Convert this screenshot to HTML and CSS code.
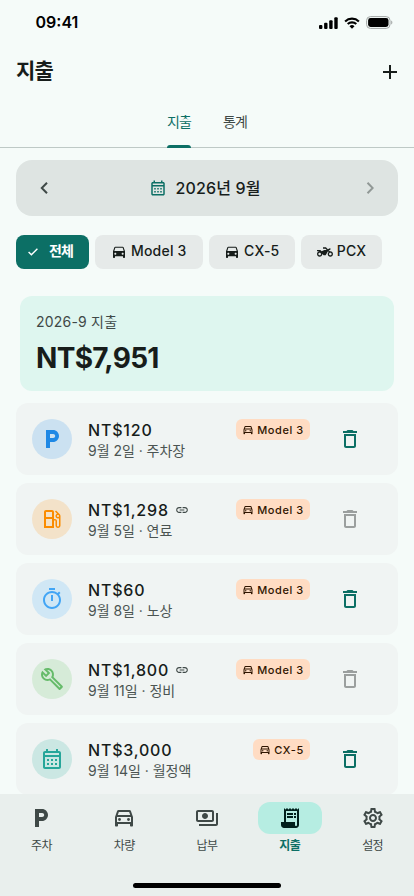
FILE: index.html
```html
<!DOCTYPE html>
<html lang="ko">
<head>
<meta charset="utf-8">
<meta name="viewport" content="width=device-width, initial-scale=1">
<title>지출</title>
<link rel="stylesheet" href="styles.css">
</head>
<body>
<svg class="sprite" aria-hidden="true">
  <symbol id="parking" viewBox="0 0 24 24"><path d="M13 3H6v18h4v-6h3c3.31 0 6-2.69 6-6s-2.69-6-6-6zm.2 8H10V7h3.2c1.1 0 2 .9 2 2s-.9 2-2 2z"/></symbol>
  <symbol id="car" viewBox="0 0 24 24"><path d="M18.92 5.01C18.72 4.42 18.16 4 17.5 4h-11c-.66 0-1.21.42-1.42 1.01L3 11v9c0 .55.45 1 1 1h1c.55 0 1-.45 1-1v-1.5h12V20c0 .55.45 1 1 1h1c.55 0 1-.45 1-1v-9l-2.08-5.99zM6.5 16c-.83 0-1.5-.67-1.5-1.5S5.67 13 6.5 13s1.5.67 1.5 1.5S7.33 16 6.5 16zm11 0c-.83 0-1.5-.67-1.5-1.5s.67-1.5 1.5-1.5 1.5.67 1.5 1.5-.67 1.5-1.5 1.5zM5 10.5l1.5-5h11l1.5 5H5z"/></symbol>
  <symbol id="car-line" viewBox="0 0 24 24"><path d="M18.92 5.01C18.72 4.42 18.16 4 17.5 4h-11c-.66 0-1.21.42-1.42 1.01L3 11v8.5c0 .55.45 1 1 1h1c.55 0 1-.45 1-1V18h12v1.5c0 .55.45 1 1 1h1c.55 0 1-.45 1-1V11l-2.08-5.99zM6.85 6h10.29l1.08 3.11H5.77L6.85 6zM19 16H5v-5h14v5z"/><circle cx="7.5" cy="13.5" r="1.4"/><circle cx="16.5" cy="13.5" r="1.4"/></symbol>
  <symbol id="moto" viewBox="0 0 24 24"><path d="M20 11c-.18 0-.36.03-.53.05L17.41 9H20V6l-3.72 1.86L13.41 5H9v2h3.59l2 2H11l-4 2-2-2H0v2h4c-2.21 0-4 1.79-4 4s1.79 4 4 4 4-1.79 4-4l2 2h3l3.49-6.1 1.01 1.01c-.91.73-1.5 1.84-1.5 3.09 0 2.21 1.79 4 4 4s4-1.79 4-4-1.79-4-4-4zM4 17c-1.1 0-2-.9-2-2s.9-2 2-2 2 .9 2 2-.9 2-2 2zm16 0c-1.1 0-2-.9-2-2s.9-2 2-2 2 .9 2 2-.9 2-2 2z"/></symbol>
  <symbol id="fuel" viewBox="0 0 24 24"><path d="M19.77 7.23l.01-.01-3.72-3.72L15 4.56l2.11 2.11c-.94.36-1.61 1.26-1.61 2.33 0 1.38 1.12 2.5 2.5 2.5.36 0 .69-.08 1-.21v7.21c0 .55-.45 1-1 1s-1-.45-1-1V14c0-1.1-.9-2-2-2h-1V5c0-1.1-.9-2-2-2H6c-1.1 0-2 .9-2 2v16h10v-7.5h1.5v5c0 1.38 1.12 2.5 2.5 2.5s2.5-1.12 2.5-2.5V9c0-.69-.28-1.32-.73-1.77zM12 13.5V19H6v-7h6v1.5zm0-3.5H6V5h6v5zm6 0c-.55 0-1-.45-1-1s.45-1 1-1 1 .45 1 1-.45 1-1 1z"/></symbol>
  <symbol id="timer" viewBox="0 0 24 24"><path d="M15 1H9v2h6V1zm-4 13h2V8h-2v6zm8.03-6.61l1.42-1.42c-.43-.51-.9-.99-1.41-1.41l-1.42 1.42C16.07 4.74 14.12 4 12 4c-4.97 0-9 4.03-9 9s4.02 9 9 9 9-4.03 9-9c0-2.12-.74-4.07-1.97-5.61zM12 20c-3.87 0-7-3.13-7-7s3.13-7 7-7 7 3.13 7 7-3.13 7-7 7z"/></symbol>
  <symbol id="wrench" viewBox="0 0 24 24"><path d="M22.61 18.99l-9.08-9.08c.93-2.34.45-5.1-1.44-7C9.79.61 6.21.4 3.66 2.26L7.5 6.11 6.08 7.52 2.25 3.69C.39 6.23.6 9.82 2.9 12.11c1.86 1.86 4.57 2.35 6.89 1.48l9.11 9.11c.39.39 1.02.39 1.41 0l2.3-2.3c.4-.38.4-1.01 0-1.41zm-3 1.6l-9.46-9.46c-.61.45-1.29.72-2 .82-1.36.2-2.79-.21-3.83-1.25C3.37 9.76 2.93 8.5 3 7.26l3.09 3.09 4.24-4.24-3.09-3.09c1.24-.07 2.49.37 3.44 1.31 1.08 1.08 1.49 2.57 1.24 3.96-.12.71-.42 1.37-.88 1.96l9.45 9.45-.88.89z"/></symbol>
  <symbol id="calendar" viewBox="0 0 24 24"><path d="M19 4h-1V2h-2v2H8V2H6v2H5c-1.11 0-1.99.9-1.99 2L3 20c0 1.1.89 2 2 2h14c1.1 0 2-.9 2-2V6c0-1.1-.9-2-2-2zm0 16H5V10h14v10zm0-12H5V6h14v2zM9 14H7v-2h2v2zm4 0h-2v-2h2v2zm4 0h-2v-2h2v2zm-8 4H7v-2h2v2zm4 0h-2v-2h2v2zm4 0h-2v-2h2v2z"/></symbol>
  <symbol id="trash" viewBox="0 0 24 24"><path d="M6 19c0 1.1.9 2 2 2h8c1.1 0 2-.9 2-2V7H6v12zM8 9h8v10H8V9zm7.5-5l-1-1h-5l-1 1H5v2h14V4z"/></symbol>
  <symbol id="link" viewBox="0 0 24 24"><path d="M3.9 12c0-1.71 1.39-3.1 3.1-3.1h4V7H7c-2.76 0-5 2.24-5 5s2.24 5 5 5h4v-1.9H7c-1.71 0-3.1-1.39-3.1-3.1zM8 13h8v-2H8v2zm9-6h-4v1.9h4c1.71 0 3.1 1.39 3.1 3.1s-1.39 3.1-3.1 3.1h-4V17h4c2.76 0 5-2.24 5-5s-2.24-5-5-5z"/></symbol>
  <symbol id="payments" viewBox="0 0 24 24"><path d="M19 14V6c0-1.1-.9-2-2-2H3c-1.1 0-2 .9-2 2v8c0 1.1.9 2 2 2h14c1.1 0 2-.9 2-2zm-2 0H3V6h14v8zm-7-7c-1.66 0-3 1.34-3 3s1.34 3 3 3 3-1.34 3-3-1.34-3-3-3zm13 0v11c0 1.1-.9 2-2 2H4v-2h17V7h2z"/></symbol>
  <symbol id="receipt" viewBox="0 0 24 24"><path fill-rule="evenodd" d="M19.5 3.5L18 2l-1.5 1.5L15 2l-1.5 1.5L12 2l-1.5 1.5L9 2 7.5 3.5 6 2v14H3v3c0 1.66 1.34 3 3 3h12c1.66 0 3-1.34 3-3V2l-1.5 1.5zM19 19c0 .55-.45 1-1 1s-1-.45-1-1v-3H8V5h11v14z"/><path d="M9 7h6v2H9zM16 7h2v2h-2zM9 10h6v2H9zM16 10h2v2h-2z"/></symbol>
  <symbol id="gear" viewBox="0 0 24 24"><path d="M19.43 12.98c.04-.32.07-.64.07-.98s-.03-.66-.07-.98l2.11-1.65c.19-.15.24-.42.12-.64l-2-3.46c-.09-.16-.26-.25-.44-.25-.06 0-.12.01-.17.03l-2.49 1c-.52-.4-1.08-.73-1.69-.98l-.38-2.65C14.46 2.18 14.25 2 14 2h-4c-.25 0-.46.18-.49.42l-.38 2.65c-.61.25-1.17.59-1.69.98l-2.49-1c-.06-.02-.12-.03-.18-.03-.17 0-.34.09-.43.25l-2 3.46c-.13.22-.07.49.12.64l2.11 1.65c-.04.32-.07.65-.07.98s.03.66.07.98l-2.11 1.65c-.19.15-.24.42-.12.64l2 3.46c.09.16.26.25.44.25.06 0 .12-.01.17-.03l2.49-1c.52.4 1.08.73 1.69.98l.38 2.65c.03.24.24.42.49.42h4c.25 0 .46-.18.49-.42l.38-2.65c.61-.25 1.17-.59 1.69-.98l2.49 1c.06.02.12.03.18.03.17 0 .34-.09.43-.25l2-3.46c.12-.22.07-.49-.12-.64l-2.11-1.65zm-1.98-1.71c.04.31.05.52.05.73 0 .21-.02.43-.05.73l-.14 1.13.89.7 1.08.84-.7 1.21-1.27-.51-1.04-.42-.9.68c-.43.32-.84.56-1.25.73l-1.06.43-.16 1.13-.2 1.35h-1.4l-.19-1.35-.16-1.13-1.06-.43c-.43-.18-.83-.41-1.23-.71l-.91-.7-1.06.43-1.27.51-.7-1.21 1.08-.84.89-.7-.14-1.13c-.03-.31-.05-.54-.05-.74s.02-.43.05-.73l.14-1.13-.89-.7-1.08-.84.7-1.21 1.27.51 1.04.42.9-.68c.43-.32.84-.56 1.25-.73l1.06-.43.16-1.13.2-1.35h1.39l.19 1.35.16 1.13 1.06.43c.43.18.83.41 1.23.71l.91.7 1.06-.43 1.27-.51.7 1.21-1.07.85-.89.7.14 1.13zM12 8c-2.21 0-4 1.79-4 4s1.79 4 4 4 4-1.79 4-4-1.79-4-4-4zm0 6c-1.1 0-2-.9-2-2s.9-2 2-2 2 .9 2 2-.9 2-2 2z"/></symbol>
</svg>

<div class="screen">
  <div class="status">
    <span class="clock">09:41</span>
    <div class="status-icons">
      <svg width="19" height="12" viewBox="0 0 19 12"><rect x="0" y="8" width="3.4" height="4" rx="1"/><rect x="5.1" y="5.8" width="3.4" height="6.2" rx="1"/><rect x="10.2" y="3.2" width="3.4" height="8.8" rx="1"/><rect x="15.3" y="0.3" width="3.4" height="11.7" rx="1"/></svg>
      <svg class="wifi" width="16" height="12" viewBox="0 0 16 12"><path d="M1.1 4.4a10 10 0 0 1 13.8 0M3.7 7.1a6.3 6.3 0 0 1 8.6 0" fill="none" stroke="#000" stroke-width="2.1"/><path d="M8 11.7 5.5 9.2a3.7 3.7 0 0 1 5 0z"/></svg>
      <svg class="battery" width="27" height="13" viewBox="0 0 27 13"><rect x=".6" y=".6" width="23.4" height="11.8" rx="3.8" fill="none" stroke="#a2a6a5" stroke-width="1"/><rect x="2.1" y="2.1" width="20.4" height="8.8" rx="2.4"/><path d="M25.2 4.5v4c1.6-.6 1.6-3.4 0-4z" fill="#a2a6a5"/></svg>
    </div>
  </div>

  <header class="header">
    <h1>지출</h1>
    <svg width="14" height="14" viewBox="0 0 14 14"><path d="M7 0v14M0 7h14" stroke="#171d1b" stroke-width="2"/></svg>
  </header>

  <nav class="tabs">
    <span class="tab active">지출</span>
    <span class="tab">통계</span>
  </nav>

  <main class="content">
    <section class="month">
      <svg class="arrow" width="8" height="12" viewBox="0 0 8 12"><path d="M7 .8 1.8 6 7 11.2" fill="none" stroke="currentColor" stroke-width="2"/></svg>
      <div class="month-label"><svg class="icon18"><use href="#calendar"/></svg><span>2026년 9월</span></div>
      <svg class="arrow off" width="8" height="12" viewBox="0 0 8 12"><path d="M1.5 .8 6.7 6 1.5 11.2" fill="none" stroke="currentColor" stroke-width="2"/></svg>
    </section>

    <section class="chips">
      <span class="chip chip-all"><svg width="10" height="8" viewBox="0 0 10 8"><path d="m.6 4 2.8 2.8L9.4.8" fill="none" stroke="#fff" stroke-width="1.4"/></svg><b>전체</b></span>
      <span class="chip chip-m3"><svg class="icon16"><use href="#car"/></svg><span>Model 3</span></span>
      <span class="chip chip-cx"><svg class="icon16"><use href="#car"/></svg><span>CX-5</span></span>
      <span class="chip chip-pcx"><svg class="icon16"><use href="#moto"/></svg><span>PCX</span></span>
    </section>

    <section class="total">
      <div class="total-label">2026-9 지출</div>
      <div class="total-value">NT$7,951</div>
    </section>

    <section class="list">
      <article class="item">
        <div class="avatar blue"><svg class="icon24"><use href="#parking"/></svg></div>
        <div class="info"><div class="amount">NT$120</div><div class="meta">9월 2일 · 주차장</div></div>
        <div class="badge"><svg class="icon12"><use href="#car-line"/></svg>Model 3</div>
        <svg class="icon24 trash"><use href="#trash"/></svg>
      </article>
      <article class="item">
        <div class="avatar orange"><svg class="icon24"><use href="#fuel"/></svg></div>
        <div class="info"><div class="amount">NT$1,298<svg class="icon14"><use href="#link"/></svg></div><div class="meta">9월 5일 · 연료</div></div>
        <div class="badge"><svg class="icon12"><use href="#car-line"/></svg>Model 3</div>
        <svg class="icon24 trash off"><use href="#trash"/></svg>
      </article>
      <article class="item">
        <div class="avatar sky"><svg class="icon24"><use href="#timer"/></svg></div>
        <div class="info"><div class="amount">NT$60</div><div class="meta">9월 8일 · 노상</div></div>
        <div class="badge"><svg class="icon12"><use href="#car-line"/></svg>Model 3</div>
        <svg class="icon24 trash"><use href="#trash"/></svg>
      </article>
      <article class="item">
        <div class="avatar green"><svg class="icon24"><use href="#wrench"/></svg></div>
        <div class="info"><div class="amount">NT$1,800<svg class="icon14"><use href="#link"/></svg></div><div class="meta">9월 11일 · 정비</div></div>
        <div class="badge"><svg class="icon12"><use href="#car-line"/></svg>Model 3</div>
        <svg class="icon24 trash off"><use href="#trash"/></svg>
      </article>
      <article class="item">
        <div class="avatar teal"><svg class="icon24"><use href="#calendar"/></svg></div>
        <div class="info"><div class="amount">NT$3,000</div><div class="meta">9월 14일 · 월정액</div></div>
        <div class="badge short"><svg class="icon12"><use href="#car-line"/></svg>CX-5</div>
        <svg class="icon24 trash"><use href="#trash"/></svg>
      </article>
    </section>
  </main>

  <footer class="bottom">
    <nav class="nav">
      <div class="nav-item"><span class="pill"><svg class="icon24"><use href="#parking"/></svg></span>주차</div>
      <div class="nav-item"><span class="pill"><svg class="icon24"><use href="#car-line"/></svg></span>차량</div>
      <div class="nav-item"><span class="pill"><svg class="icon24"><use href="#payments"/></svg></span>납부</div>
      <div class="nav-item active"><span class="pill"><svg class="icon24"><use href="#receipt"/></svg></span>지출</div>
      <div class="nav-item"><span class="pill"><svg class="icon24"><use href="#gear"/></svg></span>설정</div>
    </nav>
    <div class="home"></div>
  </footer>
</div>
</body>
</html>
```
FILE: styles.css
```css
* { box-sizing: border-box; }
body {
  margin: 0;
  font-family: Inter, "Noto Sans CJK KR", sans-serif;
  color: #171d1b;
  background: #f5fbf9;
}
svg { display: block; flex: none; }
.sprite { position: absolute; width: 0; height: 0; }
.icon12 { width: 12px; height: 12px; fill: currentColor; }
.icon14 { width: 14px; height: 14px; fill: currentColor; }
.icon16 { width: 16px; height: 16px; fill: currentColor; }
.icon18 { width: 18px; height: 18px; fill: currentColor; }
.icon24 { width: 24px; height: 24px; fill: currentColor; }

.screen { width: 414px; height: 896px; display: flex; flex-direction: column; overflow: hidden; }

.status { height: 44px; flex: none; display: flex; justify-content: space-between; padding: 0 21px 0 35.5px; }
.clock { font-size: 16px; font-weight: 600; line-height: 45px; color: #000; }
.status-icons { display: flex; align-items: center; height: 45px; }
.wifi { margin-left: 6px; }
.battery { margin-left: 6px; }

.header { height: 56px; flex: none; display: flex; align-items: center; justify-content: space-between; padding: 0 17px 0 16px; }
.header h1 { margin: 0 0 2px; font-size: 21px; font-weight: 600; letter-spacing: -0.8px; line-height: 30px; }

.tabs { height: 48px; flex: none; display: flex; justify-content: center; gap: 32px; border-bottom: 1px solid #bec9c6; }
.tab { position: relative; width: 24px; height: 48px; line-height: 43px; font-size: 14px; font-weight: 400; letter-spacing: -0.9px; color: #3f4947; white-space: nowrap; }
.tab.active { color: #0c6f65; }
.tab.active::after { content: ""; position: absolute; left: 0; right: 0; bottom: 0; height: 3px; border-radius: 3px 3px 0 0; background: #0c6f65; }

.content { flex: 1; min-height: 0; overflow: hidden; padding: 12px 16px 0; }
.month { height: 56px; border-radius: 16px; background: #dee4e2; display: flex; align-items: center; justify-content: space-between; padding: 0 24px; }
.arrow { color: #3f4947; }
.arrow.off { color: #919896; }
.month-label { display: flex; align-items: center; gap: 8px; margin-right: 4px; font-size: 16px; font-weight: 500; letter-spacing: .15px; line-height: 22px; }
.month-label svg { color: #0c6f65; }

.chips { display: flex; gap: 6px; margin-top: 19px; }
.chip { height: 34px; border-radius: 8px; background: #e6eae9; display: flex; align-items: center; justify-content: center; gap: 4px; font-size: 14px; font-weight: 500; letter-spacing: .2px; white-space: nowrap; }
.chip span { line-height: 20px; margin-top: -2px; }
.chip-all { width: 73px; padding-right: 4px; background: #0c6f65; color: #fff; gap: 11px; letter-spacing: -.8px; }
.chip-all b { font-weight: 600; line-height: 20px; margin-top: -2px; }
.chip-m3 { width: 107.5px; }
.chip-cx { width: 86.5px; }
.chip-pcx { width: 81px; }

.total { margin: 27px 4px 12px; height: 95px; border-radius: 12px; background: #def6ef; padding: 16px; }
.total-label { font-size: 14px; line-height: 19px; letter-spacing: .2px; color: #3f4947; }
.total-value { font-size: 28px; font-weight: 700; line-height: 34px; margin-top: 10px; letter-spacing: -.7px; }

.list { display: flex; flex-direction: column; gap: 8px; }
.item { height: 72px; flex: none; border-radius: 12px; background: #f0f4f3; display: flex; align-items: center; padding: 0 36px 0 16px; }
.avatar { width: 40px; height: 40px; border-radius: 50%; display: flex; align-items: center; justify-content: center; }
.blue { background: #cbe1f1; color: #1e88e5; }
.orange { background: #f3e2c9; color: #fb8c00; }
.sky { background: #d0e7f5; color: #42a5f5; }
.green { background: #d6ebd8; color: #66bb6a; }
.teal { background: #cbe7e3; color: #26a69a; }
.info { margin: 2px 0 0 16px; flex: 1; }
.amount { display: flex; align-items: center; gap: 6px; font-size: 16px; line-height: 22px; font-weight: 500; letter-spacing: .8px; }
.amount svg { color: #3f4947; }
.meta { font-size: 14px; line-height: 20px; letter-spacing: -.03px; color: #4b5452; white-space: nowrap; }
.badge { width: 74px; height: 20.5px; align-self: flex-start; margin-top: 16px; border-radius: 6px; background: #ffdcc3; color: #2f1500; display: flex; align-items: center; justify-content: center; gap: 3px; padding-top: 1px; font-size: 11px; font-weight: 500; letter-spacing: .6px; white-space: nowrap; }
.badge.short { width: 57px; }
.trash { margin-left: 28px; color: #0c6f65; }
.trash.off { color: #9b9f9e; }

.bottom { height: 102px; flex: none; background: #e9efed; }
.nav { display: flex; padding-top: 7.5px; height: 89px; }
.nav-item { flex: 1; display: flex; flex-direction: column; align-items: center; gap: 3.5px; font-size: 12px; line-height: 18px; letter-spacing: -.6px; color: #3f4947; }
.pill { width: 64px; height: 32px; border-radius: 12px; display: flex; align-items: center; justify-content: center; }
.nav-item.active { color: #0c6f65; font-weight: 700; }
.active .pill { background: #b6ede2; color: #00201c; }
.home { width: 148px; height: 5px; border-radius: 3px; background: #000; margin: 0 auto; }
```
